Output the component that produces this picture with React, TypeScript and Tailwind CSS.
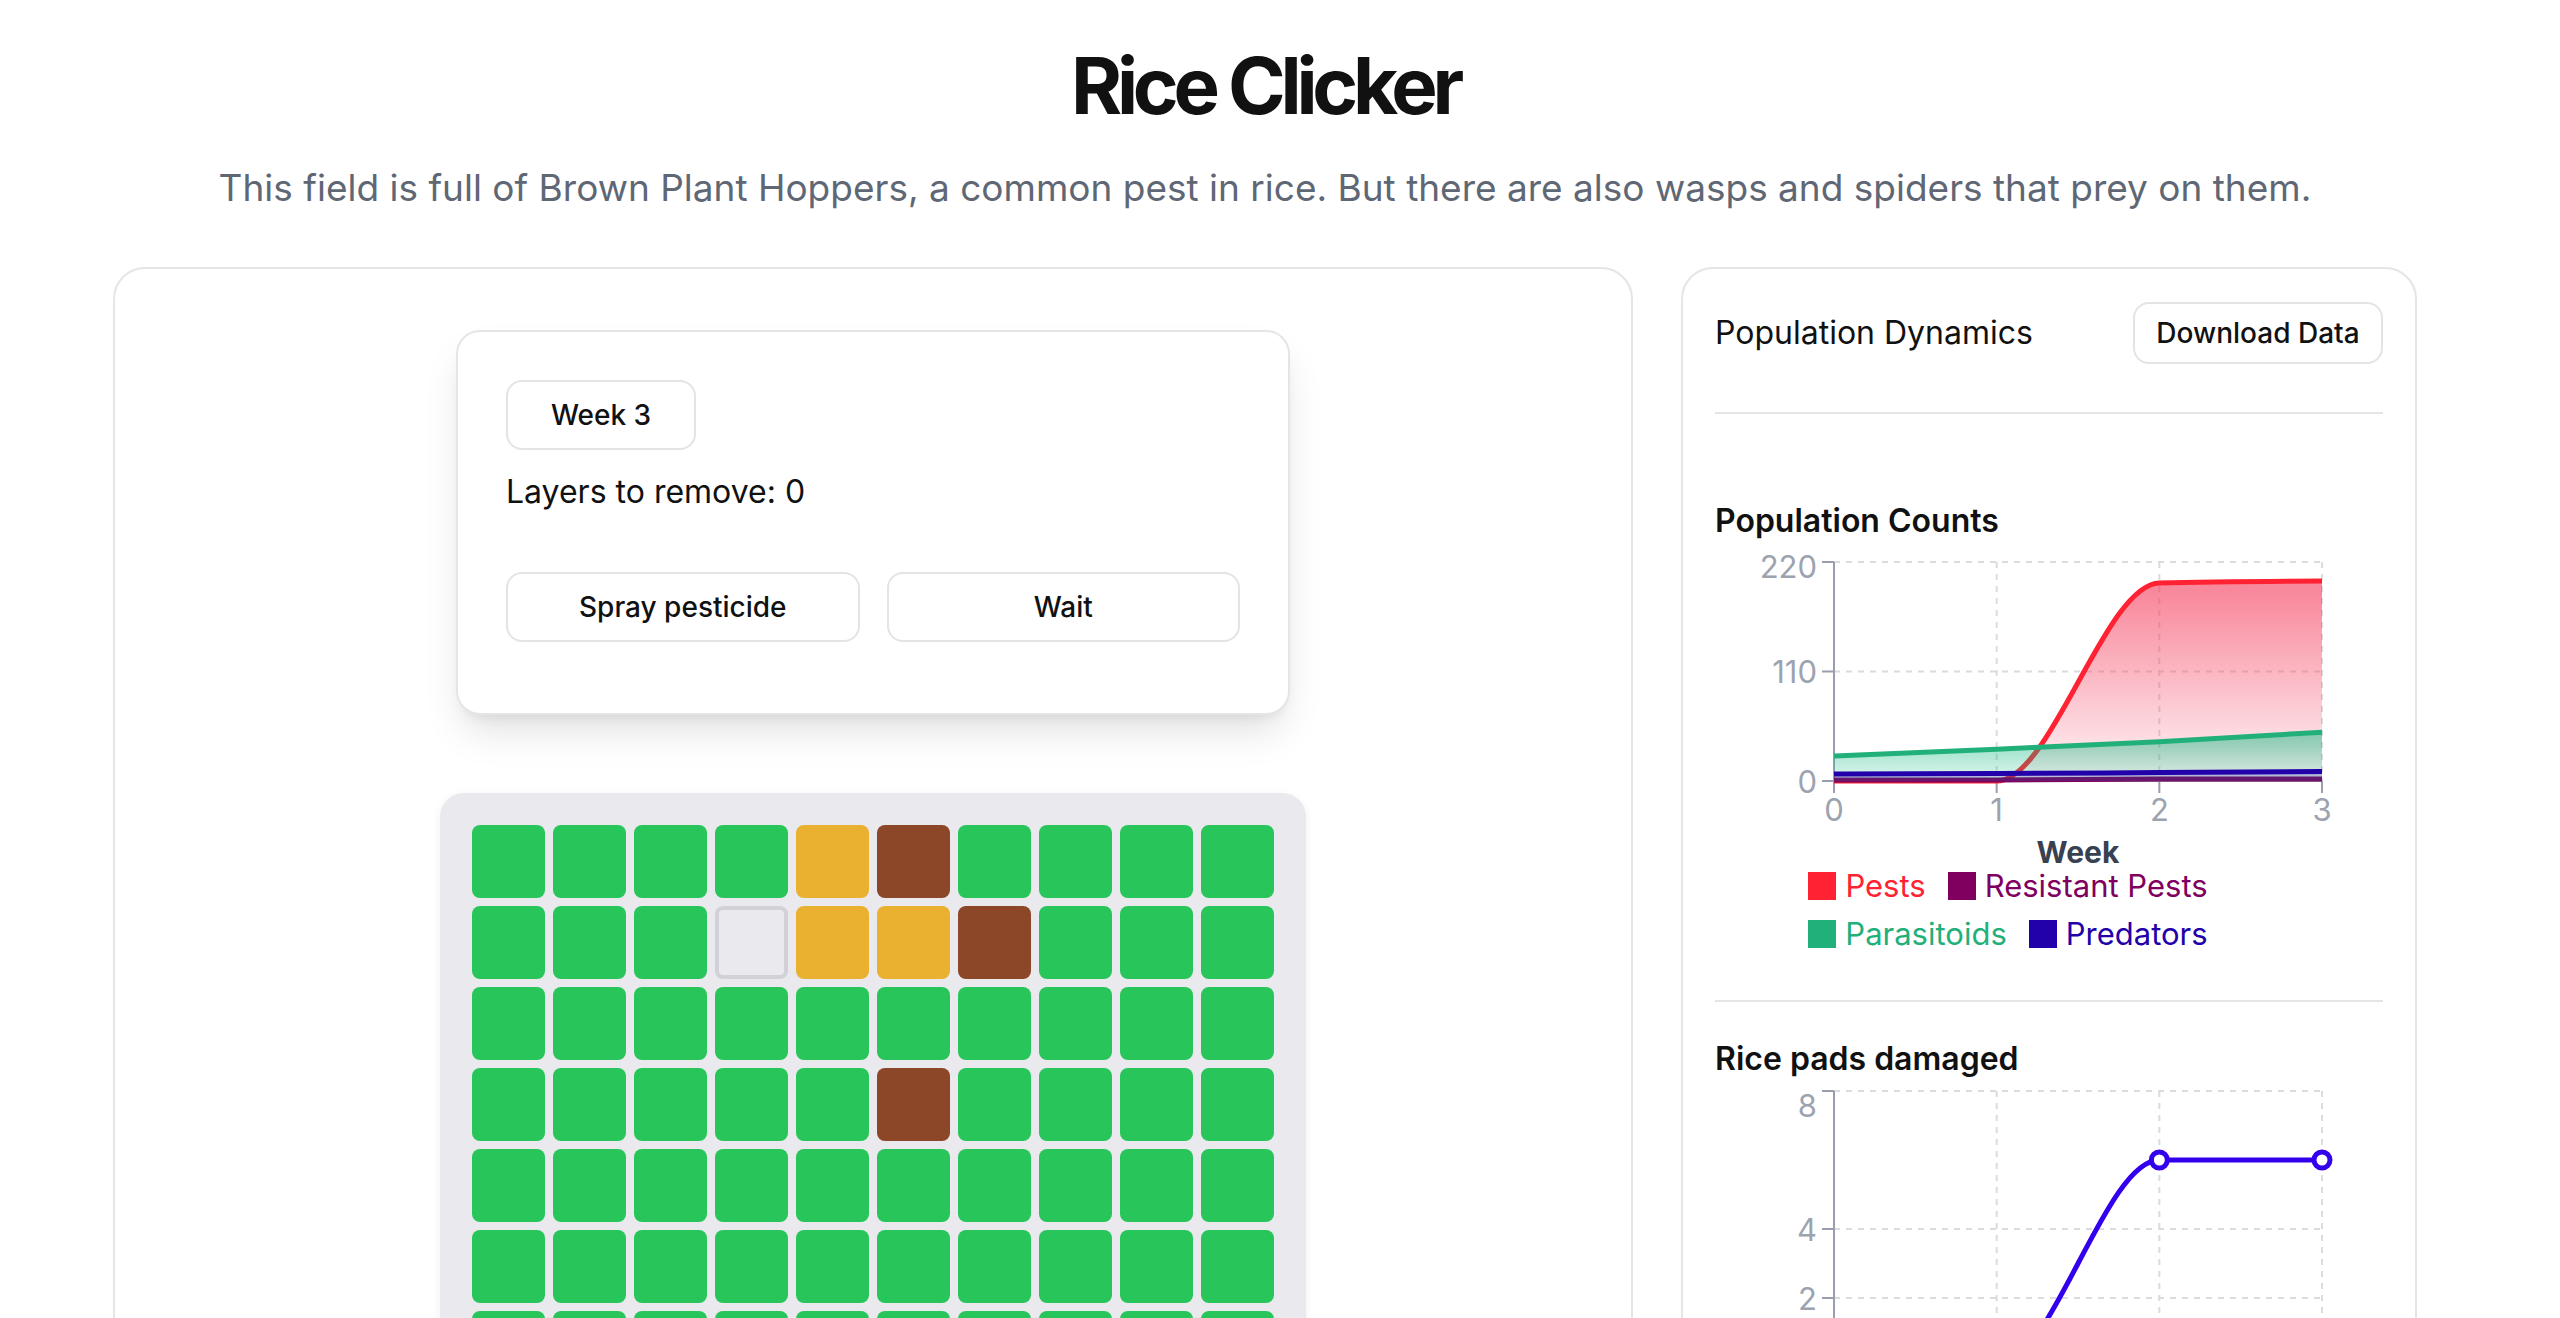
import React from 'react'

type Cell = 'G' | 'Y' | 'B' | 'E'

// 10x10 paddy field, one letter per pad
const field: string[] = [
  'GGGGYBGGGG',
  'GGGEYYBGGG',
  'GGGGGGGGGG',
  'GGGGGBGGGG',
  'GGGGGGGGGG',
  'GGGGGGGGGG',
  'GGGGGGGGGG',
  'GGGGGGGGGG',
  'GGGGGGGGGG',
  'GGGGGGGGGG',
]

const cellStyles: Record<Cell, string> = {
  G: 'bg-[#28c65a]',
  Y: 'bg-[#e9b12f]',
  B: 'bg-[#8c4628]',
  E: 'border-4 border-[#d1d1d7] bg-[#e9e9ee]',
}

interface Series {
  key: string
  label: string
  color: string
  values: number[]
  width: number
  fill?: { color: string; from: number; to: number }
  legendClass: string
  swatchClass: string
}

const populations: Series[] = [
  {
    key: 'pests',
    label: 'Pests',
    color: '#ff2233',
    values: [0, 0, 199, 201],
    width: 5,
    fill: { color: '#f43f5e', from: 0.62, to: 0.08 },
    legendClass: 'text-[#ff2233]',
    swatchClass: 'bg-[#ff2233]',
  },
  {
    key: 'resistant',
    label: 'Resistant Pests',
    color: '#800060',
    values: [1, 1, 2, 2],
    width: 5,
    fill: { color: '#800060', from: 0.3, to: 0.05 },
    legendClass: 'text-[#800060]',
    swatchClass: 'bg-[#800060]',
  },
  {
    key: 'parasitoids',
    label: 'Parasitoids',
    color: '#22b07a',
    values: [25, 32, 39.5, 49],
    width: 5,
    fill: { color: '#10b981', from: 0.5, to: 0.14 },
    legendClass: 'text-[#22b07a]',
    swatchClass: 'bg-[#22b07a]',
  },
  {
    key: 'predators',
    label: 'Predators',
    color: '#2200aa',
    values: [7, 7.5, 8.5, 9.5],
    width: 5,
    fill: { color: '#2200aa', from: 0.28, to: 0.1 },
    legendClass: 'text-[#2200aa]',
    swatchClass: 'bg-[#2200aa]',
  },
]

const damage: Series[] = [
  {
    key: 'damaged',
    label: 'Damaged',
    color: '#3300ee',
    values: [0, 0, 6, 6],
    width: 5,
    legendClass: 'text-[#3300ee]',
    swatchClass: 'bg-[#3300ee]',
  },
]

// same maths as d3's curveMonotoneX
function monotone(pts: [number, number][]): string {
  const n = pts.length
  if (n < 2) return ''
  if (n === 2) return `M${pts[0][0]},${pts[0][1]}L${pts[1][0]},${pts[1][1]}`
  const sign = (v: number) => (v < 0 ? -1 : 1)
  const m: number[] = new Array(n).fill(0)
  for (let i = 1; i < n - 1; i++) {
    const [x0, y0] = pts[i - 1]
    const [x1, y1] = pts[i]
    const [x2, y2] = pts[i + 1]
    const h0 = x1 - x0
    const h1 = x2 - x1
    const s0 = (y1 - y0) / h0
    const s1 = (y2 - y1) / h1
    const p = (s0 * h1 + s1 * h0) / (h0 + h1)
    m[i] = (sign(s0) + sign(s1)) * Math.min(Math.abs(s0), Math.abs(s1), 0.5 * Math.abs(p)) || 0
  }
  const h = pts[1][0] - pts[0][0]
  m[0] = (3 * (pts[1][1] - pts[0][1]) / h - m[1]) / 2
  const hl = pts[n - 1][0] - pts[n - 2][0]
  m[n - 1] = (3 * (pts[n - 1][1] - pts[n - 2][1]) / hl - m[n - 2]) / 2

  let d = `M${pts[0][0]},${pts[0][1]}`
  for (let i = 0; i < n - 1; i++) {
    const [x0, y0] = pts[i]
    const [x1, y1] = pts[i + 1]
    const dx = (x1 - x0) / 3
    d += `C${x0 + dx},${y0 + dx * m[i]},${x1 - dx},${y1 - dx * m[i + 1]},${x1},${y1}`
  }
  return d
}

function Chart({
  id,
  series,
  max,
  ticks,
  plotTop,
  plotHeight,
  height,
  topLabelShift = 0,
  dots = false,
  areas = false,
}: {
  id: string
  series: Series[]
  max: number
  ticks: number[]
  plotTop: number
  plotHeight: number
  height: number
  topLabelShift?: number
  dots?: boolean
  areas?: boolean
}) {
  const left = 119
  const right = 607
  const weeks = [0, 1, 2, 3]
  const xs = weeks.map((w) => left + (w * (right - left)) / 3)
  const base = plotTop + plotHeight
  const y = (v: number) => base - (v / max) * plotHeight

  return (
    <svg width={666} height={height} className="block overflow-visible">
      <defs>
        {series.map((s) =>
          s.fill ? (
            <linearGradient key={s.key} id={`${id}-${s.key}`} x1="0" y1="0" x2="0" y2="1">
              <stop offset="5%" stopColor={s.fill.color} stopOpacity={s.fill.from} />
              <stop offset="95%" stopColor={s.fill.color} stopOpacity={s.fill.to} />
            </linearGradient>
          ) : null
        )}
      </defs>

      {/* grid */}
      {ticks.map((t) => (
        <line key={`h${t}`} x1={left} x2={right} y1={y(t)} y2={y(t)} stroke="#dcdcdc" strokeWidth={2} strokeDasharray="6 6" />
      ))}
      {xs.map((x) => (
        <line key={`v${x}`} x1={x} x2={x} y1={plotTop} y2={base} stroke="#dcdcdc" strokeWidth={2} strokeDasharray="6 6" />
      ))}

      {/* axes */}
      <line x1={left} x2={left} y1={plotTop} y2={base} stroke="#9a9dae" strokeWidth={2} />
      <line x1={left} x2={right} y1={base} y2={base} stroke="#9a9dae" strokeWidth={2} />
      {ticks.map((t) => (
        <g key={`yt${t}`}>
          <line x1={left - 12} x2={left} y1={y(t)} y2={y(t)} stroke="#9a9dae" strokeWidth={2} />
          <text
            x={left - 17}
            y={y(t) + (t === max ? topLabelShift : 0)}
            textAnchor="end"
            dominantBaseline="central"
            fontSize={31}
            fill="#9ca3af"
          >
            {t}
          </text>
        </g>
      ))}
      {xs.map((x, i) => (
        <g key={`xt${i}`}>
          <line x1={x} x2={x} y1={base} y2={base + 12} stroke="#9a9dae" strokeWidth={2} />
          <text x={x} y={base + 40} textAnchor="middle" fontSize={31} fill="#9ca3af">
            {weeks[i]}
          </text>
        </g>
      ))}
      <text x={(left + right) / 2} y={base + 82} textAnchor="middle" fontSize={30} fontWeight={700} fill="#374151">
        Week
      </text>

      {/* series */}
      {series.map((s) => {
        const pts = s.values.map((v, i) => [xs[i], y(v)] as [number, number])
        const line = monotone(pts)
        return (
          <g key={s.key}>
            {areas && s.fill ? (
              <path d={`${line}L${xs[3]},${base}L${xs[0]},${base}Z`} fill={`url(#${id}-${s.key})`} />
            ) : null}
            <path d={line} fill="none" stroke={s.color} strokeWidth={s.width} />
            {dots
              ? pts.map(([px, py], i) => (
                  <circle key={i} cx={px} cy={py} r={8} fill="#ffffff" stroke={s.color} strokeWidth={5} />
                ))
              : null}
          </g>
        )
      })}
    </svg>
  )
}

function Legend({ items }: { items: Series[] }) {
  return (
    <div className="-mt-[3px] ml-[80px] flex w-[426px] flex-wrap justify-center gap-x-[22px]">
      {items.map((s) => (
        <div key={s.key} className="flex items-center gap-[9px]">
          <span className={`h-[28px] w-[28px] ${s.swatchClass}`} />
          <span className={`text-[31px] leading-[48px] ${s.legendClass}`}>{s.label}</span>
        </div>
      ))}
    </div>
  )
}

function ControlPanel() {
  return (
    <div className="w-[834px] rounded-[24px] border-2 border-[#e5e5e5] bg-white px-[48px] pt-[48px] pb-[71px] shadow-[0_22px_40px_-8px_rgba(0,0,0,0.13),0_8px_14px_-8px_rgba(0,0,0,0.1)]">
      <button className="h-[70px] w-[190px] rounded-[16px] border-2 border-[#e4e4e7] bg-white text-[28px] font-medium text-[#111111]">
        Week 3
      </button>
      <p className="mt-[18px] text-[32px] leading-[48px] text-[#111111]">Layers to remove: 0</p>
      <div className="mt-[56px] grid grid-cols-2 gap-[27px]">
        <button className="h-[70px] rounded-[16px] border-2 border-[#e4e4e7] bg-white text-[28px] font-medium text-[#111111]">
          Spray pesticide
        </button>
        <button className="h-[70px] rounded-[16px] border-2 border-[#e4e4e7] bg-white text-[28px] font-medium text-[#111111]">
          Wait
        </button>
      </div>
    </div>
  )
}

function Field() {
  return (
    <div className="mt-[78px] rounded-[24px] bg-[#e9e9ee] p-[32px] shadow-[0_2px_10px_rgba(0,0,0,0.06)]">
      <div className="grid grid-cols-10 gap-[8px]">
        {field.map((row, r) =>
          row.split('').map((c, i) => (
            <button key={`${r}-${i}`} className={`h-[73px] w-[73px] rounded-[8px] ${cellStyles[c as Cell]}`} />
          ))
        )}
      </div>
    </div>
  )
}

export default function App() {
  return (
    <div className="min-h-screen bg-white pr-[30px] font-['Inter',sans-serif] text-[#111111]">
      <div className="mx-auto w-[2304px] pt-[47px] pb-[160px]">
        <h1 className="text-center text-[78px] leading-none font-bold tracking-[-0.067em] text-[#111111]">Rice Clicker</h1>
        <p className="mt-[36px] text-center text-[37px] leading-[54px] text-[#5f6775]">
          This field is full of Brown Plant Hoppers, a common pest in rice. But there are also wasps and spiders that prey on them.
        </p>

        <div className="mt-[52px] grid grid-cols-3 gap-[48px]">
          {/* game */}
          <div className="col-span-2 flex flex-col items-center rounded-[32px] border-2 border-[#e5e5e5] bg-white pt-[61px] pb-[61px]">
            <ControlPanel />
            <Field />
          </div>

          {/* charts */}
          <div className="rounded-[32px] border-2 border-[#e5e5e5] bg-white px-[32px] pt-[33px]">
            <div className="flex items-center justify-between border-b-2 border-[#e5e5e5] pb-[48px]">
              <h2 className="text-[32px] leading-[48px]">Population Dynamics</h2>
              <button className="h-[62px] w-[250px] rounded-[16px] border-2 border-[#e4e4e7] bg-white text-[28px] font-medium">
                Download Data
              </button>
            </div>

            <h3 className="mt-[83px] text-[32px] leading-[48px] font-semibold">Population Counts</h3>
            <Chart
              id="pop"
              series={populations}
              max={220}
              ticks={[0, 110, 220]}
              plotTop={17}
              plotHeight={219}
              height={320}
              topLabelShift={4}
              areas
            />
            <Legend items={populations} />

            <div className="mt-[42px] border-t-2 border-[#e5e5e5]" />

            <h3 className="mt-[33px] text-[32px] leading-[48px] font-semibold">Rice pads damaged</h3>
            <Chart
              id="dmg"
              series={damage}
              max={8}
              ticks={[0, 2, 4, 8]}
              plotTop={8}
              plotHeight={276}
              height={384}
              topLabelShift={14}
              dots
            />
          </div>
        </div>
      </div>
    </div>
  )
}
